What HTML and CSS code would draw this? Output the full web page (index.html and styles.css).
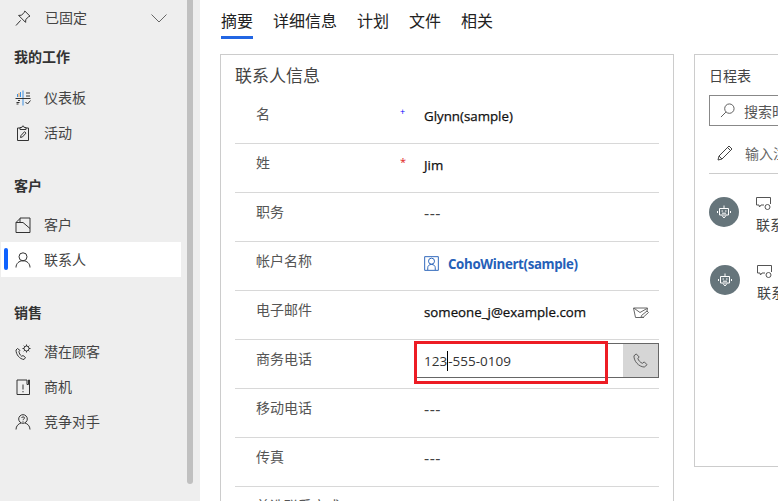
FILE: index.html
```html
<!DOCTYPE html>
<html lang="zh">
<head>
<meta charset="utf-8">
<title>联系人</title>
<link rel="stylesheet" href="styles.css">
</head>
<body>
<div class="app">
  <aside class="sidebar">
    <nav class="nav">
      <div class="pinned">
        <svg class="ico" viewBox="0 0 16 16"><path d="M1 15.500 5.600 10.400M9.800 1 15 6.200 13.800 6.600 10.800 9.400 10.600 12.400 3.600 5.400 6.600 5.200 9.400 2.200Z"/></svg>
        <span class="nav-label">已固定</span>
        <svg class="chev" viewBox="0 0 16 9"><path d="M.5.5 8 8 15.500 .5"/></svg>
      </div>
      <div class="group-title first">我的工作</div>
      <div class="item">
        <svg class="ico" viewBox="0 0 16 16"><path class="blue" d="M8 .5v15M2.500 4v3M5.500 2v5"/><path class="orange" d="M4 3v4"/><path d="M.5 8.500h15M11 3h4M11 6h4M3 10.500h2M1.500 12.500h3M1.500 14h2M10.500 12l2 2 3-3.500"/></svg>
        <span class="nav-label">仪表板</span>
      </div>
      <div class="item">
        <svg class="ico" viewBox="0 0 16 16"><path d="M5 3H2.500v12.500h11V3H11M5 4.500V2.500h1.800l.7-1.500h1l.7 1.500H11v2ZM5.500 12.500l.5-2 3.500-3.800 1.500 1.400-3.500 3.800Z"/></svg>
        <span class="nav-label">活动</span>
      </div>
      <div class="group-title">客户</div>
      <div class="item">
        <svg class="ico" viewBox="0 0 16 16"><path d="M1 15.500V5.500L5 1.500M1 15.500h14V1H5v4.500H1M5 5.500h3l7 6"/></svg>
        <span class="nav-label">客户</span>
      </div>
      <div class="item active">
        <svg class="ico" viewBox="0 0 16 16"><circle cx="8" cy="4.800" r="4"/><path d="M1 15.500c0-4 3-6.700 7-6.700s7 2.700 7 6.700"/></svg>
        <span class="nav-label">联系人</span>
      </div>
      <div class="group-title">销售</div>
      <div class="item">
        <svg class="ico" viewBox="0 0 16 16"><path d="M2.500 4.500 1 6c0 4.500 3.500 9 8 9.500l1.500-2-2.500-2-1.300.8C5 11 4 9 4 7.500L5 6.500Z"/><circle cx="11.500" cy="4.500" r="2.500"/><path d="M11.500.5v1.500M11.500 7v1.500M7.500 4.500H9M14 4.500h1.500M8.700 1.700l1 1M13.300 6.300l1 1M14.300 1.700l-1 1M9.700 6.300l-1 1"/></svg>
        <span class="nav-label">潜在顾客</span>
      </div>
      <div class="item">
        <svg class="ico" viewBox="0 0 16 16"><path d="M12 1H2v14.500h12.500V1h-1v4.500H12ZM8 5.500v5M8 12v1.300"/></svg>
        <span class="nav-label">商机</span>
      </div>
      <div class="item">
        <svg class="ico" viewBox="0 0 16 16"><circle cx="8" cy="5" r="4.300"/><path d="M1 15.500c0-3.500 2.500-5.800 5-6.500M15 15.500c0-3.500-2.500-5.800-5-6.500M6.500 4c.5-1.500 3-1.500 3 0 0 1-1.500 1-1.500 2.200M8 7.300v1"/></svg>
        <span class="nav-label">竞争对手</span>
      </div>
    </nav>
    <div class="track"><div class="thumb"></div></div>
  </aside>

  <main class="main">
    <div class="tabs">
      <div class="tab selected">摘要</div>
      <div class="tab">详细信息</div>
      <div class="tab">计划</div>
      <div class="tab">文件</div>
      <div class="tab">相关</div>
    </div>
    <div class="columns">
      <section class="card">
        <h2 class="card-title">联系人信息</h2>
        <div class="row first-row">
          <div class="label">名</div>
          <div class="req blue-req">+</div>
          <div class="value">Glynn(sample)</div>
        </div>
        <div class="row">
          <div class="label">姓</div>
          <div class="req red-req">*</div>
          <div class="value">Jim</div>
        </div>
        <div class="row">
          <div class="label">职务</div>
          <div class="req"></div>
          <div class="value dash">---</div>
        </div>
        <div class="row">
          <div class="label">帐户名称</div>
          <div class="req"></div>
          <div class="value link">
            <svg class="acct" viewBox="0 0 16 16"><path d="M.7.7h14.600v14.600H.7ZM4 15v-2.500c0-2 1.500-3.500 4-3.500s4 1.500 4 3.500V15"/><circle cx="8" cy="5.500" r="3.200"/></svg>
            <span>CohoWinert(sample)</span>
          </div>
        </div>
        <div class="row">
          <div class="label">电子邮件</div>
          <div class="req"></div>
          <div class="value spread">
            <span>someone_j@example.com</span>
            <svg class="mail" viewBox="0 0 16 12"><path d="M11 10.500H2.500L.5 1h14L14 4M1 1.200 7 5.500 14 1.500M8 10.500l.5-2L14 4l1.500 1.500L10.500 10Z"/></svg>
          </div>
        </div>
        <div class="row phone-row">
          <div class="label">商务电话</div>
          <div class="req"></div>
          <div class="phone">
            <div class="phone-text"><span>123</span><span class="caret"></span><span>-555-0109</span></div>
            <div class="phone-btn">
              <svg class="call" viewBox="0 0 16 16"><path d="M3.500 1 1 3c0 6 5 11.500 11 12l3-2.500-3-3-2 1.500C7.500 10 6 8 5.200 6L6.500 4.200Z"/></svg>
            </div>
            <div class="highlight"></div>
          </div>
        </div>
        <div class="row">
          <div class="label">移动电话</div>
          <div class="req"></div>
          <div class="value dash">---</div>
        </div>
        <div class="row">
          <div class="label">传真</div>
          <div class="req"></div>
          <div class="value dash">---</div>
        </div>
        <div class="row">
          <div class="label">首选联系方式</div>
          <div class="req"></div>
          <div class="value"></div>
        </div>
      </section>

      <section class="timeline">
        <h2 class="tl-title">日程表</h2>
        <div class="search">
          <svg class="search-ico" viewBox="0 0 16 16"><circle cx="10" cy="6" r="5"/><path d="M6.300 9.700 1 15"/></svg>
          <span>搜索时间线</span>
        </div>
        <div class="note">
          <svg class="pencil" viewBox="0 0 16 16"><path d="M1 15l1-4L12 1l3 3L5 14ZM2 11l3 3M10.500 2.500l3 3"/></svg>
          <span>输入注释</span>
        </div>
        <div class="tl-entry">
          <div class="avatar"><svg class="bot" viewBox="0 0 14 14"><path d="M7 .5v2.500M2.500 3.500h9v6.500H2.500ZM.5 6v2M13.500 6v2M5 10.500l2 2.500 2-2.500"/><path class="dots" d="M4.500 6h1.500M8 6h1.500M5 8.200h4"/></svg></div>
          <div class="tl-body">
            <svg class="bubble" viewBox="0 0 16 14"><path d="M8 8H5L3.500 10 3 8H.5V.5h14V7"/><circle cx="11.500" cy="10" r="2.500"/></svg>
            <div class="tl-text">联系人信息</div>
          </div>
        </div>
        <div class="tl-entry second">
          <div class="avatar"><svg class="bot" viewBox="0 0 14 14"><path d="M7 .5v2.500M2.500 3.500h9v6.500H2.500ZM.5 6v2M13.500 6v2M5 10.500l2 2.500 2-2.500"/><path class="dots" d="M4.500 6h1.500M8 6h1.500M5 8.200h4"/></svg></div>
          <div class="tl-body">
            <svg class="bubble" viewBox="0 0 16 14"><path d="M8 8H5L3.500 10 3 8H.5V.5h14V7"/><circle cx="11.500" cy="10" r="2.500"/></svg>
            <div class="tl-text">联系人信息</div>
          </div>
        </div>
      </section>
    </div>
  </main>
</div>
</body>
</html>
```

FILE: styles.css
```css
* { box-sizing: border-box; }
html, body { margin: 0; padding: 0; height: 100%; overflow: hidden; background: #fff; }
body { font-family: "Open Sans", "Noto Sans CJK SC", sans-serif; font-size: 14px; color: #333; }
svg { display: block; fill: none; stroke: #333; stroke-width: 1; flex: none; }

.app { display: flex; width: 778px; height: 501px; overflow: hidden; }

.sidebar { display: flex; width: 200px; flex: none; height: 501px; background: #eee; }
.nav { width: 187px; flex: none; padding-left: 1px; padding-right: 6px; }
.track { width: 6px; flex: none; }
.thumb { width: 6px; height: 484px; background: #c0c0c0; border-radius: 0 0 3px 3px; }

.pinned { display: flex; align-items: center; height: 36px; padding-left: 14px; }
.ico { width: 16px; height: 16px; margin-right: 13px; }
.pinned .ico { margin-right: 14px; }
.blue { stroke: #3c8fe0; }
.orange { stroke: #e39a4a; }
.nav-label { font-size: 14px; line-height: 18px; color: #444; }
.chev { width: 16px; height: 9px; margin-left: 64px; stroke: #666; }

.group-title { font-size: 14px; font-weight: 700; line-height: 18px; color: #333; padding-left: 13px; margin-top: 27px; margin-bottom: 12px; }
.group-title.first { margin-top: 12px; margin-bottom: 14px; }

.item { position: relative; display: flex; align-items: center; height: 35px; padding-left: 14px; }
.active { background: #fff; }
.active::before { content: ""; position: absolute; left: 3px; top: 6px; width: 4px; height: 22px; border-radius: 2px; background: #0f62fe; }

.main { flex: 1; min-width: 0; padding: 0 0 0 20px; }
.tabs { display: flex; height: 54px; gap: 20px; padding-left: 1px; }
.tab { height: 39px; padding-top: 11px; font-size: 16px; line-height: 21px; color: #222; }
.selected { border-bottom: 3px solid #2266e3; }

.columns { display: flex; gap: 20px; align-items: flex-start; }

.card { width: 454px; flex: none; height: 460px; border: 1px solid #ccc; border-bottom: 0; padding: 0 14px; }
.card-title { margin: 0; height: 39px; padding-top: 10px; font-size: 17px; line-height: 21px; font-weight: 400; color: #444; }
.row { display: flex; height: 49px; border-top: 1px solid #d8d8d8; }
.first-row { border-top: 0; }
.label { width: 145px; padding: 9px 0 0 21px; font-size: 14px; line-height: 20px; color: #555; }
.first-row .label { padding-top: 10px; }
.req { width: 44px; padding: 11px 0 0 20px; font-size: 9px; line-height: 14px; }
.blue-req { color: #00f; }
.red-req { color: #e02020; font-size: 11px; padding-top: 11px; }
.value { flex: 1; min-width: 0; padding-top: 11px; font-size: 13.300px; line-height: 20px; -webkit-text-stroke: .25px #111; color: #111; }
.first-row .value { padding-top: 12px; }
.dash { padding-top: 10px; font-size: 16px; -webkit-text-stroke: 0; letter-spacing: .5px; color: #444; }
.link { display: flex; align-items: flex-start; gap: 9px; color: #2560b8; font-weight: 700; -webkit-text-stroke: 0; letter-spacing: -.35px; padding-top: 12px; }
.acct { width: 15px; height: 15px; margin-top: 2px; stroke: #2560b8; }
.spread { display: flex; justify-content: space-between; padding-right: 10px; }
.mail { width: 16px; height: 12px; margin-top: 5px; stroke: #666; }

.phone-row { align-items: flex-start; }
.phone { position: relative; display: flex; width: 244px; margin-left: -9px; margin-top: 3px; height: 35px; border: 1px solid #666; border-left: 0; }
.phone-text { flex: 1; padding: 7px 0 0 9px; font-size: 13.500px; line-height: 20px; color: #333; display: flex; }
.caret { width: 1px; height: 20px; background: #000; }
.phone-btn { width: 35px; flex: none; background: #d6d6d6; display: flex; align-items: center; justify-content: center; }
.call { width: 15px; height: 15px; stroke: #555; }
.highlight { position: absolute; left: -1px; top: -3px; width: 194px; height: 43px; border: 3px solid #ed1c24; pointer-events: none; }

.timeline { width: 200px; flex: none; height: 413px; border: 1px solid #ccc; padding: 0 14px; }
.tl-title { margin: 0; height: 40px; padding-top: 11px; font-size: 14px; line-height: 20px; font-weight: 400; color: #444; }
.search { display: flex; align-items: center; gap: 9px; height: 31px; width: 190px; border: 1px solid #888; padding-left: 10px; font-size: 14px; color: #555; white-space: nowrap; }
.search-ico { width: 15px; height: 15px; stroke: #555; }
.note { display: flex; align-items: center; gap: 12px; height: 48px; padding-top: 7px; border-bottom: 1px solid #ccc; width: 190px; padding-left: 8px; font-size: 14px; color: #666; white-space: nowrap; }
.pencil { width: 16px; height: 16px; stroke: #444; }
.tl-entry { display: flex; gap: 17px; margin-top: 23px; }
.second { margin-top: 31px; padding-left: 1px; }
.avatar { width: 30px; height: 30px; border-radius: 50%; background: #66757b; display: flex; align-items: center; justify-content: center; flex: none; }
.bot { width: 14px; height: 14px; stroke: #fff; }
.dots { stroke: #fff; }
.bubble { width: 16px; height: 14px; stroke: #555; }
.tl-text { margin-top: 5px; font-size: 14px; line-height: 18px; color: #444; white-space: nowrap; }
.tl-body { min-width: 0; }
```
